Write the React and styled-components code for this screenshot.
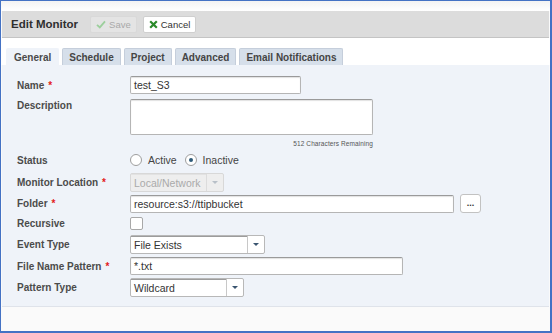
import styled, { createGlobalStyle } from 'styled-components';

const GlobalStyle = createGlobalStyle`
	html, body {
		margin: 0;
		padding: 0;
		background: #ffffff;
	}
	* {
		box-sizing: border-box;
	}
`;

const Frame = styled.div`
	width: 552px;
	height: 333px;
	border-style: solid;
	border-color: #4472c4;
	border-width: 1px 2px 2px 1px;
	background: #fafafa;
	display: flex;
	flex-direction: column;
	font-family: 'Liberation Sans', Arial, sans-serif;
	overflow: hidden;
`;

const TopStrip = styled.div`
	height: 10px;
	background: linear-gradient(#f3f3f3, #ffffff);
`;

const Header = styled.div`
	height: 27px;
	margin: 0 1px;
	background: #dcdcdc;
	border-bottom: 1px solid #c4c4c4;
	box-shadow: 0 2px 0 #ececec;
	display: flex;
	align-items: center;
	padding-left: 9px;
	gap: 6px;
`;

const Title = styled.h1`
	margin: 0 6px 0 0;
	font-size: 11.5px;
	font-weight: 700;
	color: #2f2f2f;
`;

const HeaderButton = styled.button`
	height: 17px;
	display: flex;
	align-items: center;
	gap: 3px;
	padding: 0 5px 0 5px;
	border-radius: 2px;
	border: 1px solid ${(p) => (p.disabled ? '#d9d9d9' : '#cfcfcf')};
	background: ${(p) => (p.disabled ? '#e4e4e4' : '#ffffff')};
	color: ${(p) => (p.disabled ? '#a9a9a9' : '#333333')};
	font-family: 'Liberation Sans', Arial, sans-serif;
	font-size: 9.5px;
	svg {
		display: block;
	}
`;

const Body = styled.div`
	background: #ffffff;
	padding-top: 10px;
	display: flex;
	flex-direction: column;
`;

const Tabs = styled.div`
	display: flex;
	gap: 3px;
	padding-left: 5px;
	height: 17px;
	align-items: flex-end;
`;

const Tab = styled.div`
	height: 17px;
	padding: 0 ${(p) => (p.active ? 7 : 6)}px;
	display: flex;
	align-items: center;
	font-size: 10px;
	font-weight: 700;
	color: ${(p) => (p.active ? '#4a4a4a' : '#454545')};
	background: ${(p) => (p.active ? '#eff3f9' : '#d6dfea')};
	border: 1px solid ${(p) => (p.active ? '#eff3f9' : '#c5cedb')};
	border-bottom: none;
	border-radius: 2px 2px 0 0;
`;

const Panel = styled.div`
	margin: 0 1px;
	height: 242px;
	background: #eff3f9;
	border-bottom: 1px solid #dfe3ea;
	padding: 11px 0 0 15px;
	display: flex;
	flex-direction: column;
`;

const Row = styled.div`
	display: grid;
	grid-template-columns: 113px 1fr;
	align-items: ${(p) => (p.top ? 'start' : 'center')};
	height: ${(p) => p.h}px;
	margin-top: ${(p) => p.mt || 0}px;
`;

const Label = styled.label`
	font-size: 10px;
	font-weight: 700;
	color: #4b4b4b;
	padding-top: ${(p) => (p.top ? 1 : 0)}px;
	em {
		font-style: normal;
		color: #e31b1b;
		margin-left: 4px;
	}
`;

const Field = styled.div`
	display: flex;
	align-items: center;
	gap: 6px;
`;

const TextInput = styled.div`
	width: ${(p) => p.w}px;
	height: 18px;
	background: #ffffff;
	border: 1px solid #b5b5b5;
	border-top-color: #9a9a9a;
	box-shadow: inset 0 1px 1px rgba(0, 0, 0, 0.12);
	border-radius: 2px;
	padding: 0 3px;
	display: flex;
	align-items: center;
	font-size: 10.5px;
	color: #333333;
`;

const TextArea = styled.div`
	width: 243px;
	height: 36px;
	background: #ffffff;
	border: 1px solid #b5b5b5;
	border-top-color: #9a9a9a;
	box-shadow: inset 0 1px 1px rgba(0, 0, 0, 0.12);
	border-radius: 2px;
`;

const Counter = styled.div`
	width: 243px;
	text-align: right;
	font-size: 6.5px;
	color: #555555;
	letter-spacing: 0.1px;
`;

const Radio = styled.span`
	width: 12px;
	height: 12px;
	border-radius: 50%;
	border: 1px solid #9e9e9e;
	background: #ffffff;
	display: flex;
	align-items: center;
	justify-content: center;
	&::after {
		content: '';
		width: 4px;
		height: 4px;
		border-radius: 50%;
		background: ${(p) => (p.checked ? '#2d5a78' : 'transparent')};
	}
`;

const RadioText = styled.span`
	font-size: 10.5px;
	color: #444444;
	margin-right: 2px;
`;

const Select = styled.div`
	width: ${(p) => p.w}px;
	height: 19px;
	display: flex;
	border: 1px solid ${(p) => (p.disabled ? '#d8d8d8' : '#b8b8b8')};
	border-radius: 2px;
	background: ${(p) => (p.disabled ? '#eeeeee' : '#ffffff')};
	color: ${(p) => (p.disabled ? '#aaaaaa' : '#333333')};
	font-size: 10.5px;
`;

const SelectText = styled.div`
	flex: 1;
	display: flex;
	align-items: center;
	padding-left: 3px;
	border-top: 1px solid ${(p) => (p.disabled ? '#e2e2e2' : '#9c9c9c')};
`;

const SelectArrow = styled.div`
	width: 17px;
	display: flex;
	align-items: center;
	justify-content: center;
	border-left: 1px solid ${(p) => (p.disabled ? '#dcdcdc' : '#c8c8c8')};
	&::after {
		content: '';
		border-left: 3px solid transparent;
		border-right: 3px solid transparent;
		border-top: 3px solid ${(p) => (p.disabled ? '#b8c0c8' : '#3a5570')};
	}
`;

const DotsButton = styled.div`
	width: 21px;
	height: 19px;
	background: #ffffff;
	border: 1px solid #c2c2c2;
	border-radius: 3px;
	display: flex;
	align-items: flex-end;
	justify-content: center;
	padding-bottom: 4px;
	font-size: 9px;
	line-height: 9px;
	color: #333333;
	font-weight: 700;
`;

const Checkbox = styled.span`
	width: 13px;
	height: 13px;
	background: #ffffff;
	border: 1px solid #a8a8a8;
	border-radius: 2px;
`;

const CheckIcon = ({ color }) => (
	<svg width="10" height="9" viewBox="0 0 10 9">
		<path d="M1 4.8 L3.8 7.4 L9 1.4" fill="none" stroke={color} strokeWidth="1.8" />
	</svg>
);

const CrossIcon = () => (
	<svg width="9" height="9" viewBox="0 0 9 9">
		<path d="M1.2 1.2 L7.8 7.8 M7.8 1.2 L1.2 7.8" stroke="#2a8a2a" strokeWidth="2.2" />
	</svg>
);

const Dropdown = ({ w, value, disabled }) => (
	<Select w={w} disabled={disabled}>
		<SelectText disabled={disabled}>{value}</SelectText>
		<SelectArrow disabled={disabled} />
	</Select>
);

const App = () => {
	return (
		<>
			<GlobalStyle />
			<Frame>
				<TopStrip />
				<Header>
					<Title>Edit Monitor</Title>
					<HeaderButton disabled>
						<CheckIcon color="#9ccf9c" />
						Save
					</HeaderButton>
					<HeaderButton>
						<CrossIcon />
						Cancel
					</HeaderButton>
				</Header>
				<Body>
					<Tabs>
						<Tab active>General</Tab>
						<Tab>Schedule</Tab>
						<Tab>Project</Tab>
						<Tab>Advanced</Tab>
						<Tab>Email Notifications</Tab>
					</Tabs>
				</Body>
				<Panel>
					<Row h={18}>
						<Label>Name<em>*</em></Label>
						<TextInput w={171}>test_S3</TextInput>
					</Row>
					<Row h={36} mt={5} top>
						<Label top>Description</Label>
						<TextArea />
					</Row>
					<Row h={10} mt={3}>
						<span />
						<Counter>512 Characters Remaining</Counter>
					</Row>
					<Row h={14} mt={5}>
						<Label>Status</Label>
						<Field>
							<Radio />
							<RadioText>Active</RadioText>
							<Radio checked />
							<RadioText>Inactive</RadioText>
						</Field>
					</Row>
					<Row h={19} mt={6}>
						<Label>Monitor Location<em>*</em></Label>
						<Dropdown w={94} value="Local/Network" disabled />
					</Row>
					<Row h={19} mt={2}>
						<Label>Folder<em>*</em></Label>
						<Field>
							<TextInput w={324}>resource:s3://ttipbucket</TextInput>
							<DotsButton>...</DotsButton>
						</Field>
					</Row>
					<Row h={14} mt={3}>
						<Label>Recursive</Label>
						<Checkbox />
					</Row>
					<Row h={19} mt={5}>
						<Label>Event Type</Label>
						<Dropdown w={135} value="File Exists" />
					</Row>
					<Row h={18} mt={3}>
						<Label>File Name Pattern<em>*</em></Label>
						<TextInput w={273}>*.txt</TextInput>
					</Row>
					<Row h={19} mt={3}>
						<Label>Pattern Type</Label>
						<Dropdown w={114} value="Wildcard" />
					</Row>
				</Panel>
			</Frame>
		</>
	);
};

export default App;
